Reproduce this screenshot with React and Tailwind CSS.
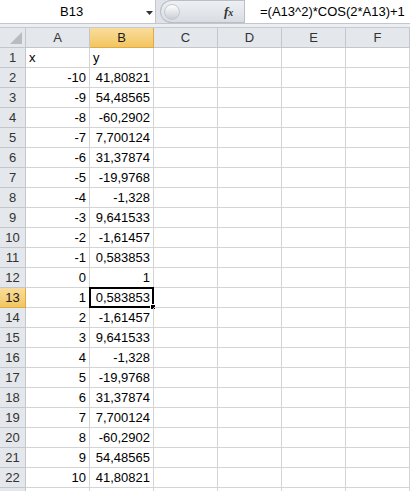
import React from "react";

const data = [
  [-10, "41,80821"],
  [-9, "54,48565"],
  [-8, "-60,2902"],
  [-7, "7,700124"],
  [-6, "31,37874"],
  [-5, "-19,9768"],
  [-4, "-1,328"],
  [-3, "9,641533"],
  [-2, "-1,61457"],
  [-1, "0,583853"],
  [0, "1"],
  [1, "0,583853"],
  [2, "-1,61457"],
  [3, "9,641533"],
  [4, "-1,328"],
  [5, "-19,9768"],
  [6, "31,37874"],
  [7, "7,700124"],
  [8, "-60,2902"],
  [9, "54,48565"],
  [10, "41,80821"],
];

const cols = ["A", "B", "C", "D", "E", "F"];

function Cell({ children, align = "right", selected = false }) {
  return (
    <div
      className={
        "relative w-[64px] h-[20px] shrink-0 border-r border-b border-[#d4d4d4] flex items-end pb-[2px] text-[13px] leading-[15px] text-black " +
        (align === "right" ? "justify-end pr-[3px]" : "justify-start pl-[3px]")
      }
    >
      {children}
      {selected && (
        <>
          <div className="absolute left-[-1px] top-[-1px] w-[65px] h-[21px] border-2 border-black pointer-events-none" />
          <div className="absolute right-[-3px] bottom-[-3px] w-[6px] h-[6px] bg-black border border-white" />
        </>
      )}
    </div>
  );
}

function RowHeader({ n, selected }) {
  return (
    <div
      className={
        "w-[26px] h-[20px] shrink-0 border-r border-b flex items-center justify-center text-[13px] " +
        (selected
          ? "bg-gradient-to-b from-[#f9dc9c] to-[#f2c65f] border-[#e4a842] text-[#1c1c1c]"
          : "bg-[#e4e7eb] border-[#c3c7cc] text-[#333]")
      }
    >
      {n}
    </div>
  );
}

export default function App() {
  return (
    <div className="w-[410px] h-[491px] overflow-hidden bg-white font-['Liberation_Sans',Arial,sans-serif] select-none">
      {/* formula bar */}
      <div className="flex h-[24px] bg-[#dfe3e8] border-b border-[#c2c7ce]">
        <div className="relative w-[156px] h-[23px] bg-white border-r border-[#c2c7ce] flex items-center">
          <span className="absolute left-[60px] top-[4px] text-[13px] leading-[15px] text-black">B13</span>
          <svg className="absolute left-[146px] top-[11px]" width="8" height="5" viewBox="0 0 8 5">
            <path d="M0 0 H7 L3.5 4 Z" fill="#333" />
          </svg>
        </div>
        <div className="w-[4px]" />
        <div className="relative w-[84px] h-[23px] rounded-l-[12px] border border-r-0 border-[#b9bfc7] bg-gradient-to-b from-[#eef0f3] to-[#d9dde3]">
          <div className="absolute left-[3px] top-[3px] w-[16px] h-[16px] rounded-full border border-[#c4c9d0] bg-gradient-to-b from-[#ffffff] to-[#c9ced5]" />
          <span className="absolute left-[63px] top-[2px] font-['Liberation_Serif',serif] italic font-bold text-[13px] text-[#333] leading-[17px]">
            f<span className="text-[10px]">x</span>
          </span>
        </div>
        <div className="flex-1 h-[23px] bg-white border-l border-[#b9bfc7] flex items-center pl-[15px]">
          <span className="text-[13px] leading-[15px] text-black whitespace-nowrap">=(A13^2)*COS(2*A13)+1</span>
        </div>
      </div>
      <div className="h-[4px] bg-[#eceef1] border-b border-[#c7cbd1]" />

      {/* column headers */}
      <div className="flex h-[20px]">
        <div className="relative w-[26px] h-[20px] shrink-0 bg-[#e4e7eb] border-r border-b border-[#c3c7cc]">
          <svg className="absolute right-[3px] bottom-[3px]" width="12" height="12" viewBox="0 0 12 12">
            <path d="M12 0 V12 H0 Z" fill="#b8bcc2" />
          </svg>
        </div>
        {cols.map((c) => (
          <div
            key={c}
            className={
              "w-[64px] h-[20px] shrink-0 border-r border-b flex items-center justify-center text-[13px] " +
              (c === "B"
                ? "bg-gradient-to-b from-[#f9dc9c] to-[#f2c65f] border-[#e4a842] text-[#1c1c1c]"
                : "bg-[#e4e7eb] border-[#c3c7cc] text-[#333]")
            }
          >
            {c}
          </div>
        ))}
      </div>

      {/* row 1 */}
      <div className="flex">
        <RowHeader n={1} />
        <Cell align="left">x</Cell>
        <Cell align="left">y</Cell>
        <Cell />
        <Cell />
        <Cell />
        <Cell />
      </div>
      {data.map(([x, y], i) => {
        const n = i + 2;
        const sel = n === 13;
        return (
          <div className="flex" key={n}>
            <RowHeader n={n} selected={sel} />
            <Cell>{x}</Cell>
            <Cell selected={sel}>{y}</Cell>
            <Cell />
            <Cell />
            <Cell />
            <Cell />
          </div>
        );
      })}
      <div className="flex">
        <RowHeader n="" />
        <Cell />
        <Cell />
        <Cell />
        <Cell />
        <Cell />
        <Cell />
      </div>
    </div>
  );
}
